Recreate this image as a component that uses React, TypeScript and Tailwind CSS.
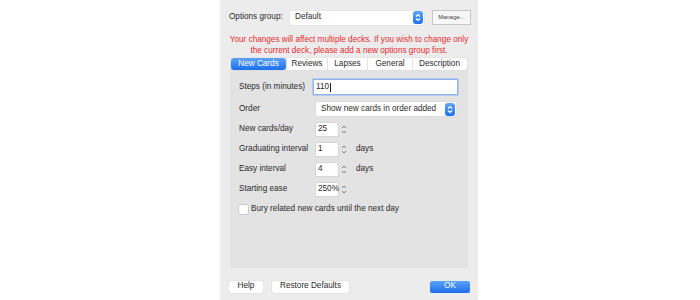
import React from 'react';

const font = { fontFamily: '"Liberation Sans", Arial, sans-serif' };

const BlueStepper: React.FC = () => (
  <span className="flex h-[13px] w-[10px] items-center justify-center rounded-[3px] bg-gradient-to-b from-[#5ea6fb] to-[#1f72ee]">
    <svg width="6" height="9" viewBox="0 0 6 9" fill="none" stroke="white" strokeWidth="1.1">
      <path d="M1 3.5 L3 1.5 L5 3.5" />
      <path d="M1 5.5 L3 7.5 L5 5.5" />
    </svg>
  </span>
);

const Stepper: React.FC = () => (
  <span className="flex h-[13px] w-[8px] items-center justify-center">
    <svg width="6" height="11" viewBox="0 0 6 11" fill="none" stroke="#777" strokeWidth="0.9">
      <path d="M1 4 L3 2 L5 4" />
      <path d="M1 7 L3 9 L5 7" />
    </svg>
  </span>
);

const SpinRow: React.FC<{ label: string; value: string; suffix?: string }> = ({ label, value, suffix }) => (
  <div className="flex h-[20px] items-center">
    <span className="w-[77px]">{label}</span>
    <span className="flex h-[13px] w-[22px] items-center bg-white pl-[2px] shadow-[0_0_0_0.5px_#c8c8c8]">{value}</span>
    <span className="ml-[2px]">
      <Stepper />
    </span>
    {suffix && <span className="ml-[8px]">{suffix}</span>}
  </div>
);

export default function App() {
  const tabs = [
    { name: 'New Cards', w: 'w-[55px]', active: true },
    { name: 'Reviews', w: 'w-[41px]' },
    { name: 'Lapses', w: 'w-[40px]' },
    { name: 'General', w: 'w-[45px]' },
    { name: 'Description', w: 'w-[54px]' },
  ];

  return (
    <div className="h-[300px] w-[700px] whitespace-nowrap bg-white text-[8.2px] text-[#2b2b2b]" style={font}>
      <div className="ml-[220px] flex h-[300px] w-[258px] flex-col bg-[#ececec]">
        {/* Options group row */}
        <div className="mt-[10px] flex h-[15px] items-center pl-[9px]">
          <span className="w-[61px]">Options group:</span>
          <div className="flex h-[14px] w-[134px] items-center justify-between rounded-[2px] bg-white pl-[5px] pr-[1px] shadow-[0_0_1px_#bbb]">
            <span>Default</span>
            <BlueStepper />
          </div>
          <button className="ml-[8px] h-[15px] w-[39px] border border-[#c6c6c6] bg-[#f7f7f7] text-[6px] text-[#444]">
            Manage...
          </button>
        </div>

        {/* Warning */}
        <div className="mt-[9px] text-center text-[8.2px] leading-[11px] text-[#ea2a2f]">
          <div>Your changes will affect multiple decks. If you wish to change only</div>
          <div>the current deck, please add a new options group first.</div>
        </div>

        {/* Tabs + panel */}
        <div className="mx-[11px] mt-[2px] flex flex-col">
          <div className="relative z-10 -mb-[6px] flex h-[12px] rounded-[3px] bg-white shadow-[0_0_1px_#bbb]">
            {tabs.map((t) => (
              <div
                key={t.name}
                className={`${t.w} flex items-center justify-center ${
                  t.active ? 'rounded-[3px] bg-gradient-to-b from-[#5aa2fa] to-[#1c6eed] text-white' : 'border-l border-[#e2e2e2]'
                }`}
              >
                {t.name}
              </div>
            ))}
          </div>
          <div className="flex h-[203px] flex-col bg-[#e3e3e3] px-[8px] pt-[15px] shadow-[0_0_0_0.5px_#d8d8d8]">
            <div className="flex h-[16px] items-center">
              <span className="w-[75px]">Steps (in minutes)</span>
              <div className="flex h-[14px] w-[143px] items-center bg-white pl-[2px] shadow-[0_0_0_1.5px_#8cb4f0]">
                110<span className="ml-[1px] h-[9px] w-[1px] bg-[#222]"></span>
              </div>
            </div>
            <div className="mt-[6px] flex h-[16px] items-center">
              <span className="w-[77px]">Order</span>
              <div className="flex h-[14px] w-[140px] items-center justify-between rounded-[2px] bg-white pl-[5px] pr-[1px] shadow-[0_0_1px_#bbb]">
                <span>Show new cards in order added</span>
                <BlueStepper />
              </div>
            </div>
            <div className="mt-[2px]">
              <SpinRow label="New cards/day" value="25" />
              <SpinRow label="Graduating interval" value="1" suffix="days" />
              <SpinRow label="Easy interval" value="4" suffix="days" />
              <SpinRow label="Starting ease" value="250%" />
            </div>
            <div className="flex h-[20px] items-center">
              <span className="h-[9px] w-[9px] rounded-[2px] bg-white shadow-[0_0_0_0.5px_#b8b8b8]"></span>
              <span className="ml-[3px]">Bury related new cards until the next day</span>
            </div>
          </div>
        </div>

        {/* Bottom buttons */}
        <div className="mt-[13px] flex h-[13px] items-center pl-[9px] pr-[8px]">
          <button className="flex h-[12px] w-[34px] items-center justify-center rounded-[2px] bg-white shadow-[0_0_1px_#aaa]">
            Help
          </button>
          <button className="ml-[9px] flex h-[12px] w-[77px] items-center justify-center rounded-[2px] bg-white shadow-[0_0_1px_#aaa]">
            Restore Defaults
          </button>
          <button className="ml-auto flex h-[12px] w-[40px] items-center justify-center rounded-[2px] bg-gradient-to-b from-[#5aa2fa] to-[#1c6eed] text-white">
            OK
          </button>
        </div>
      </div>
    </div>
  );
}
